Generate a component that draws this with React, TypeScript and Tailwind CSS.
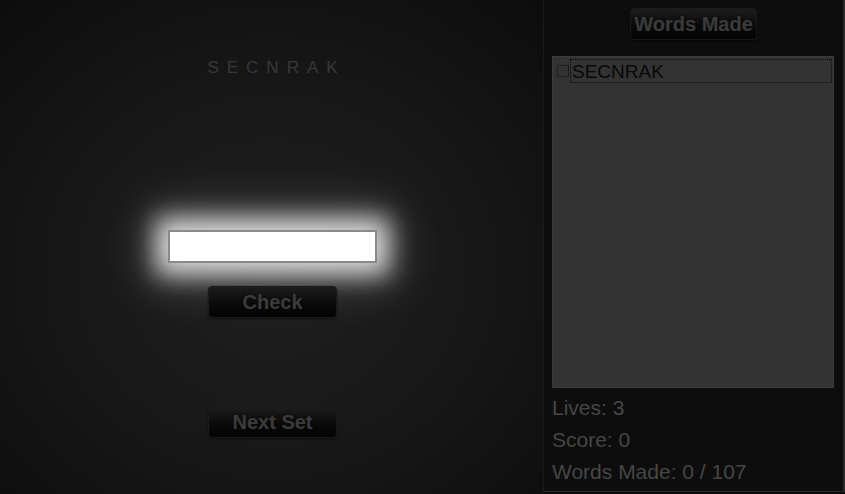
import React from "react";

export default function App() {
  const btn =
    "flex items-center justify-center rounded-[4px] border border-[#1a1a1a] bg-[linear-gradient(to_bottom,#1d1d1d,#0a0a0a_55%,#030303)] text-[20px] font-bold text-[#3b3b3b] [text-shadow:0_0_2px_rgba(0,0,0,0.9),0_0_1px_rgba(70,70,70,0.6)] shadow-[0_1px_2px_rgba(0,0,0,0.6)]";
  return (
    <div
      className="flex h-[494px] w-[845px] overflow-hidden bg-[#0a0a0a]"
      style={{ fontFamily: '"Liberation Sans", Arial, sans-serif' }}
    >
      {/* Left game area */}
      <div className="flex h-full w-[543px] flex-col items-center pl-[2px] bg-[radial-gradient(ellipse_80%_80%_at_50%_55%,#1f1f1f_0%,#181818_45%,#0b0b0b_100%)]">
        <div className="mt-[57px] h-[22px] pl-[8px] text-[17px] leading-[22px] tracking-[8px] text-[#383838]">
          SECNRAK
        </div>
        <div className="mt-[151px] h-[33px] w-[209px] border-2 border-[#8a8a8a] bg-white shadow-[0_0_24px_12px_rgba(255,255,255,0.8),0_0_50px_20px_rgba(255,255,255,0.22)]" />
        <div className={`mt-[23px] h-[32px] w-[129px] ${btn}`}>Check</div>
        <div className={`mt-[88px] h-[32px] w-[129px] ${btn}`}>Next Set</div>
      </div>

      {/* Right panel */}
      <div className="flex h-[492px] w-[302px] flex-col border-l border-r-2 border-b border-l-[#1a1a1a] border-r-[#2a2a2a] border-b-[#2c2c2c] bg-[#0d0d0d] pl-[8px]">
        <div className="flex w-[283px] justify-center pt-[8px]">
          <div className={`h-[32px] w-[127px] ${btn}`}>Words Made</div>
        </div>
        <div className="mt-[16px] h-[332px] w-[282px] border border-[#3c3c3c] bg-[#333333] pt-[2px] pl-[3px] pr-[1px]">
          <div className="flex h-[24px] items-center">
            <div className="ml-[1px] h-[12px] w-[12px] border border-[#1e1e1e]" />
            <div className="ml-[1px] flex h-[24px] flex-1 items-center border border-dotted border-[#0a0a0a] pl-[1px] text-[19px] leading-none text-[#080808]">
              SECNRAK
            </div>
          </div>
        </div>
        <div className="mt-[4px] text-[21px] leading-[32px] text-[#464646]">
          <div>Lives: 3</div>
          <div>Score: 0</div>
          <div>Words Made: 0 / 107</div>
        </div>
      </div>
    </div>
  );
}
